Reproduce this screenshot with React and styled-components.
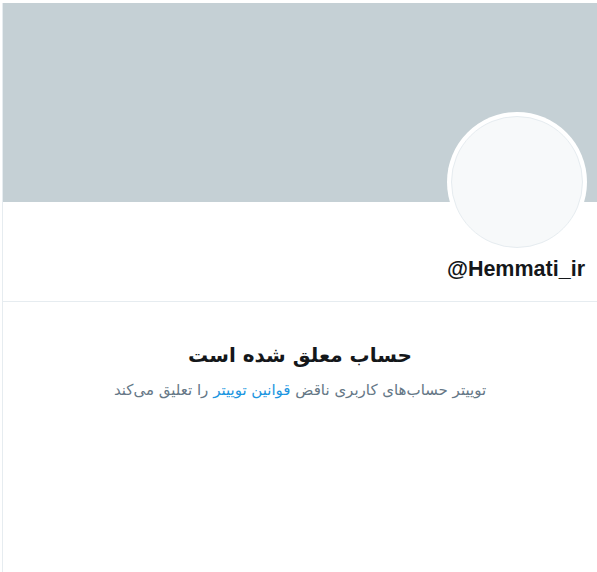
import styled, { createGlobalStyle } from "styled-components";

const GlobalStyle = createGlobalStyle`
  html, body {
    margin: 0;
    padding: 0;
    background: #ffffff;
  }
  body {
    font-family: "Liberation Sans", Arial, sans-serif;
  }
`;

const Page = styled.div`
  padding: 3px 0 0 2px;
  height: 572px;
  box-sizing: border-box;
  overflow: hidden;
`;

const Frame = styled.div`
  border-left: 1px solid #e6ecf0;
  height: 100%;
`;

const Banner = styled.div`
  height: 199px;
  background-color: #c5d0d5;
`;

const ProfileRow = styled.div`
  position: relative;
  height: 100px;
  border-bottom: 1px solid #e6ecf0;
  display: flex;
  justify-content: flex-end;
  align-items: flex-start;
  padding: 55px 12px 0 0;
  box-sizing: border-box;
`;

const Avatar = styled.div`
  position: absolute;
  top: -90px;
  right: 10px;
  width: 140px;
  height: 140px;
  border-radius: 50%;
  background: #ffffff;
  padding: 4px;
  box-sizing: border-box;
`;

const AvatarInner = styled.div`
  width: 100%;
  height: 100%;
  border-radius: 50%;
  background: #f7f9fa;
  border: 1px solid #e6ecf0;
  box-sizing: border-box;
`;

const Handle = styled.span`
  font-size: 21.5px;
  line-height: 25px;
  font-weight: 700;
  color: #14171a;
`;

const Notice = styled.div`
  direction: rtl;
  text-align: center;
  padding-top: 40px;
  font-family: "DejaVu Sans", "Noto Sans", sans-serif;
`;

const Title = styled.h1`
  margin: 0;
  font-size: 20px;
  line-height: 26px;
  font-weight: 700;
  color: #14171a;
`;

const Subtitle = styled.p`
  margin: 12px 0 0;
  font-size: 15px;
  line-height: 20px;
  color: #657786;
`;

const Link = styled.a`
  color: #1b95e0;
  text-decoration: none;
`;

export default function App() {
  return (
    <>
      <GlobalStyle />
      <Page>
        <Frame>
          <Banner />
          <ProfileRow>
            <Avatar>
              <AvatarInner />
            </Avatar>
            <Handle>@Hemmati_ir</Handle>
          </ProfileRow>
          <Notice>
            <Title>حساب معلق شده است</Title>
            <Subtitle>
              توییتر حساب‌های کاربری ناقض <Link href="#">قوانین توییتر</Link> را تعلیق می‌کند
            </Subtitle>
          </Notice>
        </Frame>
      </Page>
    </>
  );
}
